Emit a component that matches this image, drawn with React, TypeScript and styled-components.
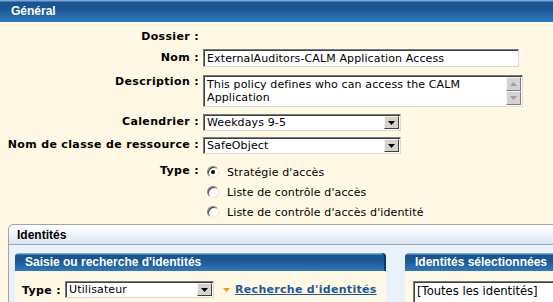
import React from 'react'
import styled, { createGlobalStyle, css } from 'styled-components'

const GlobalStyle = createGlobalStyle`
  html, body {
    margin: 0;
    padding: 0;
    background: #fff8e5;
    overflow: hidden;
  }
  body {
    font-family: "DejaVu Sans", Verdana, sans-serif;
    font-size: 11px;
    color: #000;
  }
`

const blueBar = css`
  background: linear-gradient(#7aa6d4 0, #7aa6d4 1px, #195390 2px, #1c5894 45%, #3279ba 100%);
  color: #fff;
  font-family: "Liberation Sans", Arial, sans-serif;
  font-weight: bold;
  font-size: 12px;
`

const Page = styled.div`
  width: 553px;
  height: 302px;
  overflow: hidden;
  background: #fff8e5;
`

const MainHeader = styled.div`
  ${blueBar};
  height: 22px;
  line-height: 23px;
  padding-left: 11px;
`

const Form = styled.div`
  display: flex;
  flex-direction: column;
  padding-top: 6px;
`

const Row = styled.div<{ $top?: number; $h?: number }>`
  display: grid;
  grid-template-columns: 199px 1fr;
  column-gap: 4px;
  align-items: start;
  margin-top: ${(p) => p.$top ?? 0}px;
  min-height: ${(p) => p.$h ?? 18}px;
`

const Label = styled.div<{ $pt?: number }>`
  text-align: right;
  font-weight: bold;
  white-space: nowrap;
  padding-top: ${(p) => p.$pt ?? 2}px;
  letter-spacing: 0.35px;
`

const inset = css`
  box-sizing: border-box;
  background: #fff;
  border-style: solid;
  border-width: 1px;
  border-color: #7b7b7b #dedad0 #dedad0 #7b7b7b;
  box-shadow: inset 1px 1px 0 #404040;
`

const TextBox = styled.div<{ $w: number; $h: number }>`
  ${inset};
  width: ${(p) => p.$w}px;
  height: ${(p) => p.$h}px;
  padding: 2px 0 0 3px;
  white-space: nowrap;
  overflow: hidden;
  line-height: 13px;
  letter-spacing: 0.12px;
`

const AreaBox = styled.div<{ $w: number; $h: number }>`
  ${inset};
  width: ${(p) => p.$w}px;
  height: ${(p) => p.$h}px;
  display: flex;
`

const AreaText = styled.div`
  flex: 1;
  padding: 2px 0 0 3px;
  line-height: 13px;
  letter-spacing: 0.12px;
`

const ScrollBar = styled.div`
  width: 15px;
  display: flex;
  flex-direction: column;
  justify-content: space-between;
  padding: 1px 1px 1px 0;
`

const ScrollBtn = styled.div`
  box-sizing: border-box;
  height: 14px;
  background: #d6d3ce;
  border: 1px solid;
  border-color: #f4f3f0 #7b7b7b #7b7b7b #f4f3f0;
  display: flex;
  align-items: center;
  justify-content: center;
`

const Select = styled.div<{ $w: number }>`
  ${inset};
  width: ${(p) => p.$w}px;
  flex-shrink: 0;
  height: 17px;
  display: flex;
  align-items: stretch;
  padding: 1px 1px 1px 0;
`

const SelectText = styled.div`
  flex: 1;
  padding-left: 3px;
  line-height: 14px;
  white-space: nowrap;
  overflow: hidden;
  letter-spacing: 0.12px;
`

const DropBtn = styled.div`
  box-sizing: border-box;
  width: 15px;
  background: #d6d3ce;
  border: 1px solid;
  border-color: #f4f3f0 #404040 #404040 #f4f3f0;
  display: flex;
  align-items: center;
  justify-content: center;
`

const RadioList = styled.div`
  display: flex;
  flex-direction: column;
`

const RadioRow = styled.div`
  height: 20px;
  display: flex;
  align-items: center;
  gap: 8px;
  padding-left: 4px;
  letter-spacing: 0.12px;
`

const RadioDot = styled.span<{ $on?: boolean }>`
  box-sizing: border-box;
  width: 12px;
  height: 12px;
  border-radius: 50%;
  background: #fff;
  border: 1px solid;
  border-color: #808080 #e8e6e0 #e8e6e0 #808080;
  box-shadow: inset 1px 1px 0 #404040;
  position: relative;
  ${(p) =>
    p.$on &&
    css`
      &::after {
        content: '';
        position: absolute;
        left: 3px;
        top: 3px;
        width: 4px;
        height: 4px;
        border-radius: 50%;
        background: #000;
      }
    `}
`

const Panel = styled.div`
  margin: 2px -30px 0 8px;
  border: 1px solid #a3a3a3;
  border-top-left-radius: 5px;
  background: #e9f1fb;
`

const PanelHeader = styled.div`
  height: 19px;
  line-height: 20px;
  padding-left: 8px;
  font-family: "Liberation Sans", Arial, sans-serif;
  font-weight: bold;
  font-size: 12px;
  background: linear-gradient(#ffffff, #f3f7fc 40%, #d9e6f6);
  border-bottom: 1px solid #a3a3a3;
  border-top-left-radius: 5px;
`

const PanelBody = styled.div`
  display: flex;
  gap: 19px;
  padding: 8px 0 0 6px;
  height: 80px;
`

const SubPanel = styled.div<{ $w?: number }>`
  ${(p) => (p.$w ? `width: ${p.$w}px; flex-shrink: 0;` : 'flex: 1; min-width: 0;')}
  display: flex;
  flex-direction: column;
`

const SubHeader = styled.div`
  ${blueBar};
  height: 18px;
  line-height: 19px;
  padding-left: 10px;
  white-space: nowrap;
  border-radius: 4px 4px 0 0;
  box-shadow: inset -2px 0 0 #0f3a66;
`

const SubBody = styled.div<{ $pl?: number }>`
  flex: 1;
  background: #fff8e5;
  display: flex;
  align-items: flex-start;
  padding: 10px 0 0 ${(p) => p.$pl ?? 7}px;
`

const InlineLabel = styled.span`
  font-weight: bold;
  white-space: nowrap;
  letter-spacing: 0.35px;
  margin-right: 4px;
  padding-top: 3px;
`

const Link = styled.a`
  display: flex;
  align-items: center;
  gap: 5px;
  margin-left: 9px;
  padding-top: 2px;
  color: #1d5a97;
  font-weight: bold;
  font-size: 11px;
  letter-spacing: 0.3px;
  text-decoration: underline;
  white-space: nowrap;
`

const ListBox = styled.div`
  ${inset};
  width: 200px;
  flex-shrink: 0;
  height: 40px;
  padding: 2px 0 0 3px;
  line-height: 14px;
  white-space: nowrap;
  font-size: 11.6px;
`

const Arrow = ({ dir, color }: { dir: 'up' | 'down'; color: string }) => (
  <svg width="7" height="4" viewBox="0 0 7 4">
    {dir === 'down' ? <polygon points="0,0 7,0 3.5,4" fill={color} /> : <polygon points="0,4 7,4 3.5,0" fill={color} />}
  </svg>
)

const App = () => (
  <Page>
    <GlobalStyle />
    <MainHeader>Général</MainHeader>
    <Form>
      <Row>
        <Label>Dossier :</Label>
        <div />
      </Row>
      <Row $top={3}>
        <Label>Nom :</Label>
        <TextBox $w={316} $h={18}>ExternalAuditors-CALM Application Access</TextBox>
      </Row>
      <Row $top={8} $h={32}>
        <Label $pt={0}>Description :</Label>
        <AreaBox $w={320} $h={32}>
          <AreaText>
            This policy defines who can access the CALM
            <br />
            Application
          </AreaText>
          <ScrollBar>
            <ScrollBtn>
              <Arrow dir="up" color="#a0a0a0" />
            </ScrollBtn>
            <ScrollBtn>
              <Arrow dir="down" color="#a0a0a0" />
            </ScrollBtn>
          </ScrollBar>
        </AreaBox>
      </Row>
      <Row $top={7} $h={17}>
        <Label $pt={1}>Calendrier :</Label>
        <Select $w={198}>
          <SelectText>Weekdays 9-5</SelectText>
          <DropBtn>
            <Arrow dir="down" color="#000" />
          </DropBtn>
        </Select>
      </Row>
      <Row $top={6} $h={17}>
        <Label $pt={1}>Nom de classe de ressource :</Label>
        <Select $w={198}>
          <SelectText>SafeObject</SelectText>
          <DropBtn>
            <Arrow dir="down" color="#000" />
          </DropBtn>
        </Select>
      </Row>
      <Row $top={8} $h={60}>
        <Label>Type :</Label>
        <RadioList>
          <RadioRow>
            <RadioDot $on />
            Stratégie d'accès
          </RadioRow>
          <RadioRow>
            <RadioDot />
            Liste de contrôle d'accès
          </RadioRow>
          <RadioRow>
            <RadioDot />
            Liste de contrôle d'accès d'identité
          </RadioRow>
        </RadioList>
      </Row>
    </Form>
    <Panel>
      <PanelHeader>Identités</PanelHeader>
      <PanelBody>
        <SubPanel $w={371}>
          <SubHeader>Saisie ou recherche d'identités</SubHeader>
          <SubBody>
            <InlineLabel>Type :</InlineLabel>
            <Select $w={149}>
              <SelectText>Utilisateur</SelectText>
              <DropBtn>
                <Arrow dir="down" color="#000" />
              </DropBtn>
            </Select>
            <Link href="#">
              <Arrow dir="down" color="#f29a1e" />
              Recherche d'identités
            </Link>
          </SubBody>
        </SubPanel>
        <SubPanel>
          <SubHeader>Identités sélectionnées</SubHeader>
          <SubBody $pl={8}>
            <ListBox>[Toutes les identités]</ListBox>
          </SubBody>
        </SubPanel>
      </PanelBody>
    </Panel>
  </Page>
)

export default App
